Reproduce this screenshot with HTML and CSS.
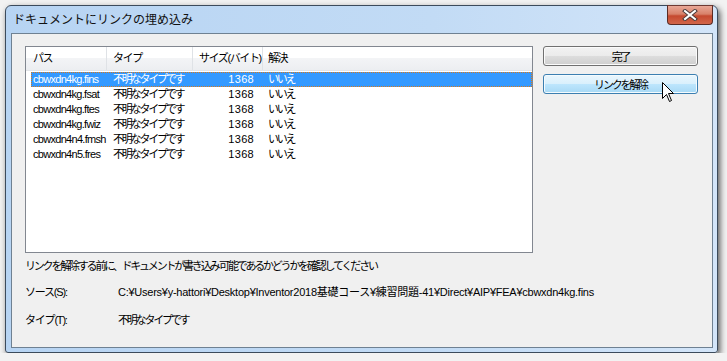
FILE: index.html
```html
<!DOCTYPE html>
<html lang="ja">
<head>
    <meta charset="UTF-8">
    <title>ドキュメントにリンクの埋め込み</title>
    <link rel="stylesheet" href="styles.css">
</head>
<body>

<div class="window">
    <div class="titlebar">
        <span class="title">ドキュメントにリンクの埋め込み</span>
        <div class="close-btn">
            <svg width="16" height="12" viewBox="0 0 16 12">
                <path d="M3 2 L13 10 M13 2 L3 10" stroke="#4a3a3a" stroke-width="4" stroke-linecap="square"/>
                <path d="M3 2 L13 10 M13 2 L3 10" stroke="#ffffff" stroke-width="2" stroke-linecap="square"/>
            </svg>
        </div>
    </div>

    <div class="client">
        <div class="top">
            <div class="listview">
                <div class="lv-head">
                    <div class="hcell">パス</div>
                    <div class="hcell">タイプ</div>
                    <div class="hcell">サイズ(バイト)</div>
                    <div class="hcell">解決</div>
                </div>
                <div class="lv-row selected">
                    <div class="c-name">cbwxdn4kg.fins</div>
                    <div class="c-type ja">不明なタイプです</div>
                    <div class="c-size">1368</div>
                    <div class="c-res ja">いいえ</div>
                </div>
                <div class="lv-row">
                    <div class="c-name">cbwxdn4kg.fsat</div>
                    <div class="c-type ja">不明なタイプです</div>
                    <div class="c-size">1368</div>
                    <div class="c-res ja">いいえ</div>
                </div>
                <div class="lv-row">
                    <div class="c-name">cbwxdn4kg.ftes</div>
                    <div class="c-type ja">不明なタイプです</div>
                    <div class="c-size">1368</div>
                    <div class="c-res ja">いいえ</div>
                </div>
                <div class="lv-row">
                    <div class="c-name">cbwxdn4kg.fwiz</div>
                    <div class="c-type ja">不明なタイプです</div>
                    <div class="c-size">1368</div>
                    <div class="c-res ja">いいえ</div>
                </div>
                <div class="lv-row">
                    <div class="c-name">cbwxdn4n4.fmsh</div>
                    <div class="c-type ja">不明なタイプです</div>
                    <div class="c-size">1368</div>
                    <div class="c-res ja">いいえ</div>
                </div>
                <div class="lv-row">
                    <div class="c-name">cbwxdn4n5.fres</div>
                    <div class="c-type ja">不明なタイプです</div>
                    <div class="c-size">1368</div>
                    <div class="c-res ja">いいえ</div>
                </div>
            </div>

            <div class="buttons">
                <button class="btn ja">完了</button>
                <button class="btn hover ja">リンクを解除</button>
            </div>
        </div>

        <p class="msg ja">リンクを解除する前に、ドキュメントが書き込み 可能であるかどうかを確認してください</p>

        <div class="field">
            <span class="label">ソース(S):</span>
            <span class="value path">C:¥Users¥y-hattori¥Desktop¥Inventor2018基礎コース¥練習問題-41¥Direct¥AIP¥FEA¥cbwxdn4kg.fins</span>
        </div>
        <div class="field">
            <span class="label">タイプ(T):</span>
            <span class="value ja">不明なタイプです</span>
        </div>
    </div>

    <!-- mouse pointer over the button -->
    <svg class="cursor" width="13" height="20" viewBox="0 0 13 20">
        <path d="M0.5 0.5 L0.5 16.5 L4.5 12.5 L7.5 19.5 L9.5 18.5 L6.5 11.5 L11.5 11.5 Z" fill="#fff" stroke="#000" stroke-width="1"/>
    </svg>
</div>

</body>
</html>
```

FILE: styles.css
```css
/* ウィンドウ全体 */
body {
    margin: 0;
    background-color: #f2f2f2;
    font-family: "Liberation Sans", "Noto Sans CJK JP", sans-serif;
    font-size: 11px;
    color: #000;
}

.window {
    position: relative;
    box-sizing: border-box;
    width: 713px;
    height: 348px;
    margin: 5px 0 0 5px;
    border: 1px solid #3c4b5c;
    border-radius: 6px 6px 3px 3px;
    background: linear-gradient(to right, #b7d4f3, #c2dbf5 60%, #d3e5f9);
    box-shadow: 2px 3px 6px rgba(0, 0, 0, 0.65);
    padding: 0 4px 4px 5px;
    display: flex;
    flex-direction: column;
}

.titlebar {
    height: 27px;
    display: flex;
    justify-content: space-between;
    align-items: flex-start;
}

.title {
    font-family: "Noto Sans CJK JP", sans-serif;
    font-size: 12px;
    line-height: 14px;
    margin: 6px 0 0 2px;
    color: #111;
}

.close-btn {
    width: 44px;
    height: 18px;
    margin-top: -1px;
    border: 1px solid #5a2b24;
    border-top-color: #6e3a33;
    border-radius: 0 0 4px 4px;
    background: linear-gradient(to bottom, #e9a897, #d88169 45%, #c5492f 55%, #d2664a);
    display: flex;
    justify-content: center;
    align-items: center;
}

.client {
    flex: 1;
    background-color: #f0f0f0;
    border: 1px solid #6f8192;
    padding: 12px 14px 0 13px;
}

.top {
    display: flex;
    gap: 10px;
}

/* リストビュー */
.listview {
    box-sizing: border-box;
    width: 509px;
    height: 207px;
    border: 1px solid #828790;
    background-color: #fff;
}

.lv-head {
    display: grid;
    grid-template-columns: 81px 86px 70px 1fr;
    height: 23px;
    background: linear-gradient(to bottom, #ffffff 50%, #f3f4f6 50%, #eceef1);
    border-bottom: 1px solid #e3e5e8;
    margin-bottom: 1px;
}

.hcell {
    line-height: 23px;
    padding-left: 6px;
    border-right: 1px solid #dfe2e6;
    white-space: nowrap;
    letter-spacing: -1.4px;
}

.hcell:first-child {
    padding-left: 7px;
}

.hcell:last-child {
    border-right: none;
    padding-left: 5px;
}

.lv-row {
    display: grid;
    grid-template-columns: 76px 86px 70px 1fr;
    height: 15px;
    line-height: 15px;
    margin: 0 0 0 5px;
    white-space: nowrap;
    box-sizing: border-box;
}

.lv-row.selected {
    background-color: #3399ff;
    color: #fff;
    outline: 1px dotted #d87a1c;
    outline-offset: -1px;
}

.c-name {
    padding-left: 2px;
    letter-spacing: -0.7px;
}

.c-type {
    padding-left: 6px;
}

.c-size {
    text-align: right;
    padding-right: 9px;
    letter-spacing: 0.3px;
}

.c-res {
    padding-left: 5px;
}

.ja {
    letter-spacing: -2.2px;
}

/* ボタン */
.buttons {
    display: flex;
    flex-direction: column;
    gap: 8px;
}

.btn {
    width: 155px;
    height: 20px;
    padding: 0;
    font-family: "Noto Sans CJK JP", sans-serif;
    font-size: 11px;
    color: #000;
    border: 1px solid #707070;
    border-radius: 3px;
    background: linear-gradient(to bottom, #f2f2f2, #ebebeb 50%, #dddddd 50%, #cfcfcf);
    box-shadow: inset 0 0 0 1px #fbfbfb;
}

.btn.hover {
    border-color: #3c7fb1;
    background: linear-gradient(to bottom, #eaf6fd, #d9f0fc 50%, #bee6fd 50%, #a7d9f5);
    box-shadow: inset 0 0 0 1px #f4fbfe;
}

/* 下のテキスト */
.msg {
    margin: 6px 0 0 0;
    line-height: 14px;
}

.field {
    display: flex;
    margin-top: 12px;
    line-height: 14px;
    white-space: nowrap;
}

.field + .field {
    margin-top: 14px;
}

.label {
    width: 93px;
    letter-spacing: -1.2px;
}

.path {
    letter-spacing: -0.25px;
}

.cursor {
    position: absolute;
    left: 656px;
    top: 76px;
}
```
